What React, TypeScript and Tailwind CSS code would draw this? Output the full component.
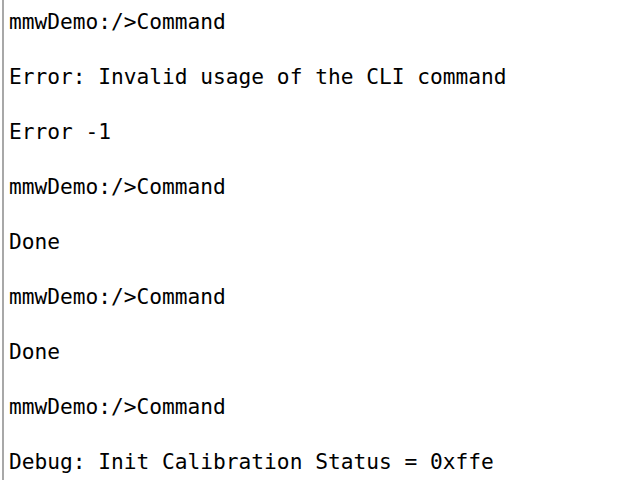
export default function App() {
  const lines = [
    "mmwDemo:/>Command",
    "Error: Invalid usage of the CLI command",
    "Error -1",
    "mmwDemo:/>Command",
    "Done",
    "mmwDemo:/>Command",
    "Done",
    "mmwDemo:/>Command",
    "Debug: Init Calibration Status = 0xffe",
  ];
  return (
    <div className="w-[623px] h-[480px] bg-white overflow-hidden pl-[2px]">
      <div className="h-full border-l-[2px] border-[#a8a8a8] pl-[5px] pt-[8px] flex flex-col gap-[28px] text-black text-[21.2px] leading-[27px] whitespace-pre" style={{ fontFamily: '"DejaVu Sans Mono", monospace' }}>
        {lines.map((l, i) => (
          <div key={i}>{l}</div>
        ))}
      </div>
    </div>
  );
}
